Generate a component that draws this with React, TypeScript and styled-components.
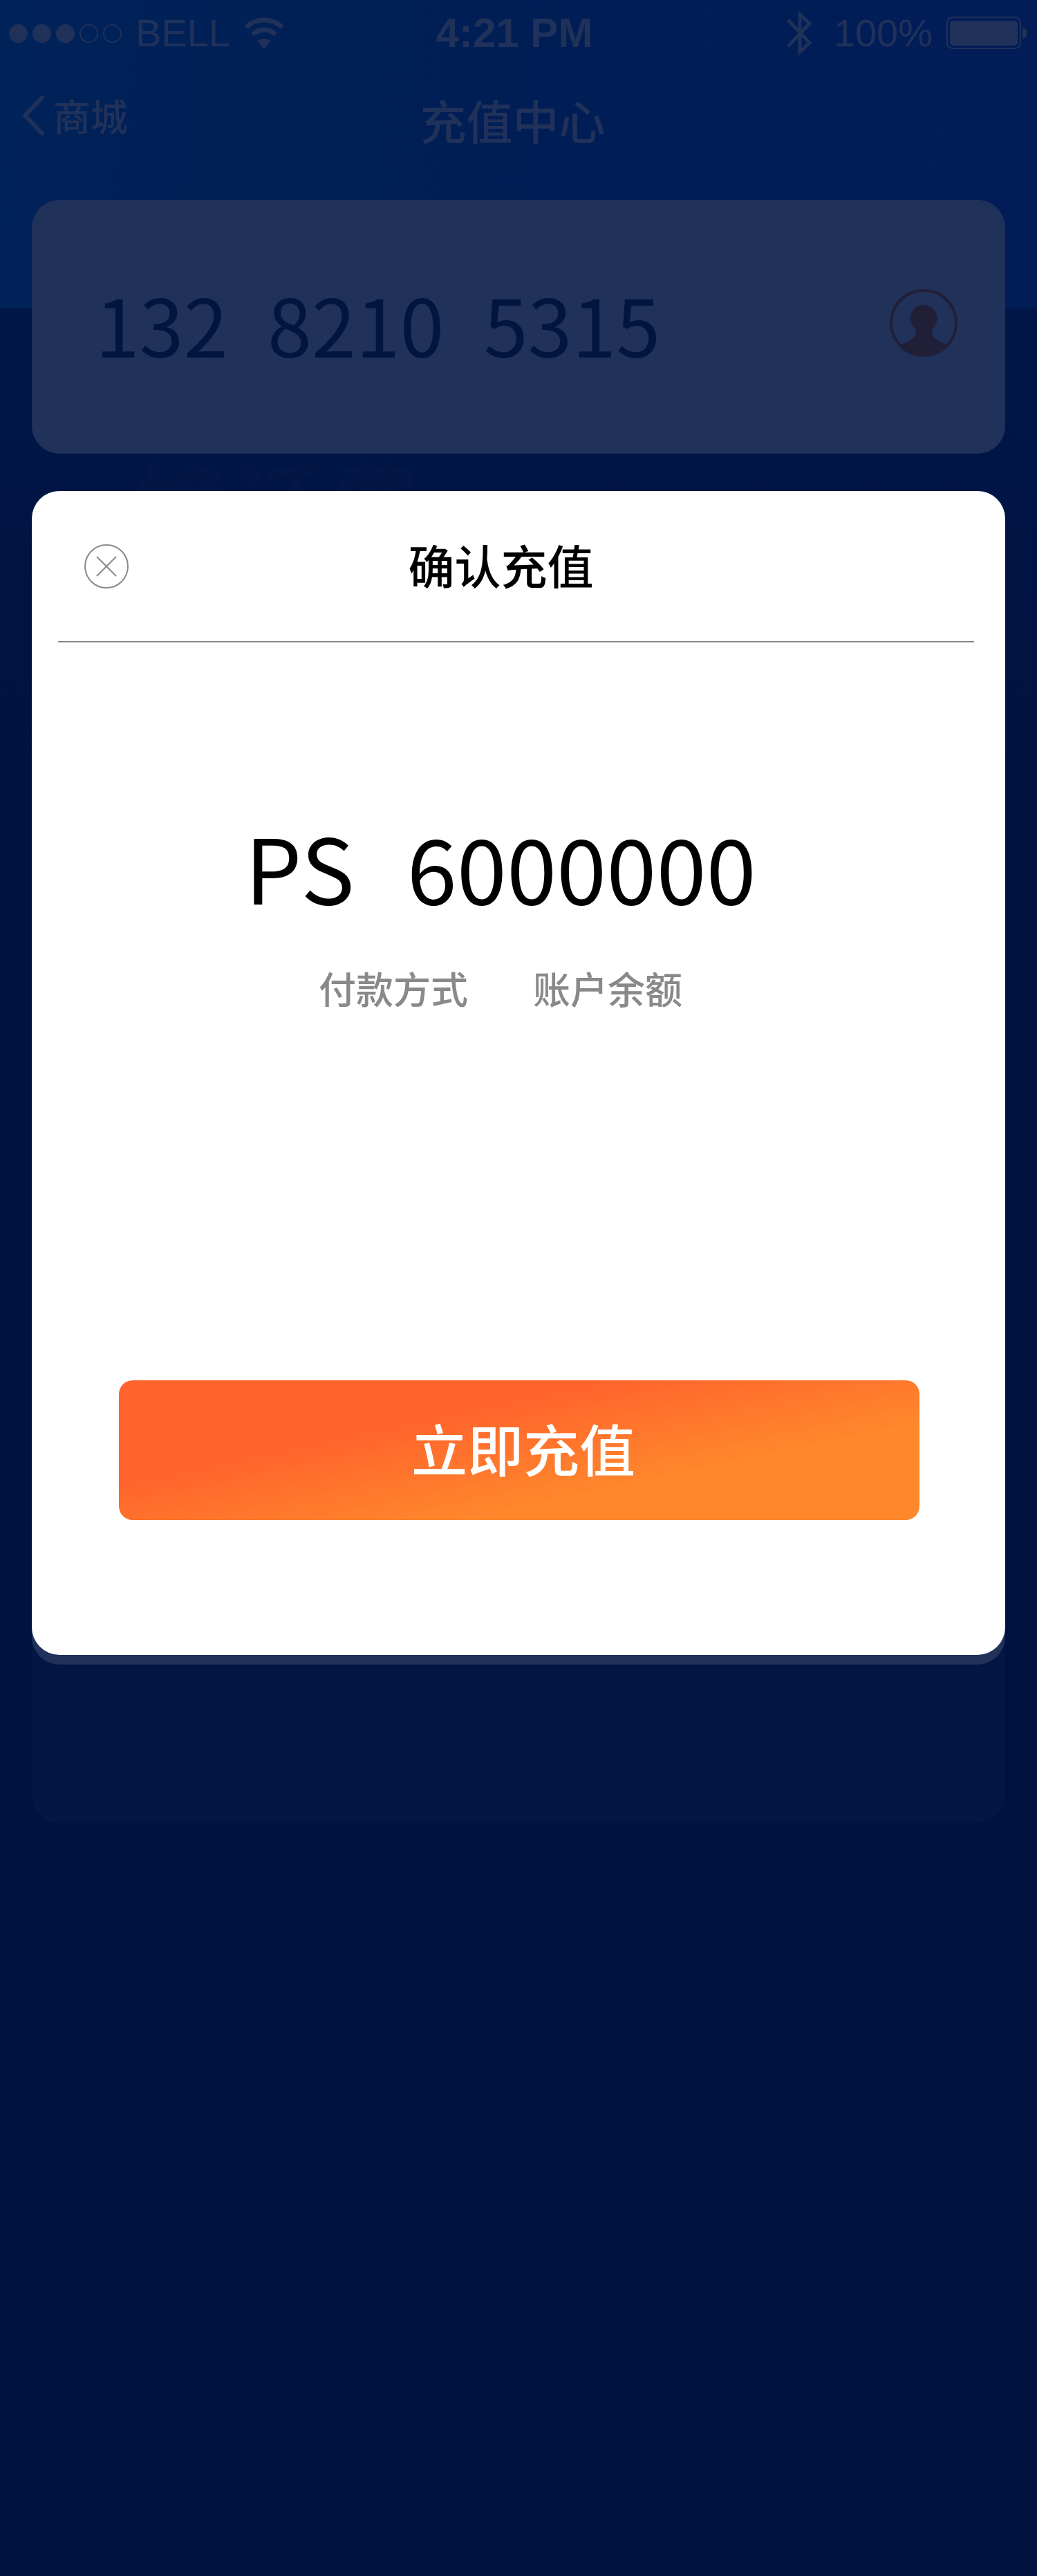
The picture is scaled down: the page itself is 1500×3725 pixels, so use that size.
import React from "react";
import styled, { createGlobalStyle } from "styled-components";

const dim = "#20315a";
const cjk = `"Noto Sans CJK SC", sans-serif`;

const GlobalStyle = createGlobalStyle`
  * { box-sizing: border-box; }
  body { margin: 0; background: #001240; font-family: ${cjk}; }
  button, input { font-family: inherit; border: 0; padding: 0; background: none; }
`;

const Page = styled.div`
  min-height: 100vh;
  background:
    linear-gradient(97deg, #00235a 0%, #001f55 30%, #001e55 55%, #021c58 100%) top / 100% 445px no-repeat,
    linear-gradient(180deg, #001748 445px, #001240 1100px);
`;

const StatusBar = styled.div`
  display: grid;
  grid-template-columns: 1fr auto 1fr;
  align-items: center;
  height: 96px;
  padding: 0 13px;
  color: ${dim};
  font-family: "Liberation Sans", Arial, sans-serif;
  font-size: 56px;
  line-height: 64px;
`;

const StatusGroup = styled.div<{ $end?: boolean }>`
  display: flex;
  align-items: center;
  justify-content: ${(p) => (p.$end ? "flex-end" : "flex-start")};
  gap: 20px;
`;

const Dots = styled.span`
  display: flex;
  gap: 7px;
`;

const Dot = styled.span<{ $on: boolean }>`
  width: 27px;
  height: 27px;
  border-radius: 50%;
  border: 2px solid ${dim};
  background: ${(p) => (p.$on ? dim : "transparent")};
`;

const Clock = styled.time`
  margin-right: 12px;
  font-size: 60px;
  font-weight: 700;
`;

const NavBar = styled.nav`
  display: grid;
  grid-template-columns: 1fr auto 1fr;
  align-items: center;
  height: 193px;
  padding: 0 48px 40px 31px;
  color: ${dim};
`;

const BackLink = styled.a`
  display: flex;
  align-items: center;
  gap: 12px;
  padding-bottom: 12px;
  color: inherit;
  text-decoration: none;
  font-size: 54px;
  font-weight: 500;
  line-height: 64px;
`;

const PageTitle = styled.h1`
  margin: 0;
  font-size: 67px;
  line-height: 80px;
  font-weight: 500;
`;

const Main = styled.main`
  padding: 0 46px;
`;

const PhoneCard = styled.section`
  display: flex;
  align-items: center;
  justify-content: space-between;
  height: 367px;
  padding: 0 69px 12px 92px;
  border-radius: 40px;
  background: ${dim};
`;

const PhoneInput = styled.input`
  flex: 1;
  min-width: 0;
  height: 168px;
  color: #01153f;
  font-size: 115px;
  outline: none;
`;

const IconButton = styled.button`
  display: flex;
  cursor: pointer;
`;

const PromoStrip = styled.div`
  height: 54px;
  padding-left: 149px;
  color: #031746;
  font-size: 140px;
  font-weight: 700;
  line-height: 140px;
`;

/* Lies over the lower part of the promo heading. */
const FaintPanel = styled.div`
  position: relative;
  padding-bottom: 229px;
  border-radius: 40px;
  background: #041744;
`;

const BackPanel = styled.div`
  padding-bottom: 14px;
  border-radius: 40px;
  background: ${dim};
`;

const Dialog = styled.section`
  display: flex;
  flex-direction: column;
  padding: 0 45px 195px 38px;
  border-radius: 40px;
  background: #fff;
`;

const DialogHeader = styled.header`
  display: grid;
  grid-template-columns: 1fr auto 1fr;
  align-items: center;
  height: 219px;
  padding: 0 82px 0 38px;
  border-bottom: 2px solid #898989;
`;

const DialogTitle = styled.h2`
  margin: 0;
  padding-bottom: 6px;
  font-size: 67px;
  line-height: 80px;
  font-weight: 500;
  color: #000;
`;

const Summary = styled.div`
  display: flex;
  flex-direction: column;
  align-items: center;
  gap: 66px;
  padding: 242px 45px 0 0;
`;

const Amount = styled.p`
  display: flex;
  gap: 76px;
  margin: 0;
  color: #000;
  font-size: 130px;
  line-height: 160px;
`;

const Payment = styled.dl`
  display: flex;
  gap: 94px;
  margin: 0;
  color: #898989;
  font-size: 54px;
  font-weight: 500;
  line-height: 64px;

  dd { margin: 0; }
`;

const SubmitButton = styled.button`
  height: 202px;
  margin: 535px 79px 0 88px;
  padding: 0 0 8px 12px;
  border-radius: 20px;
  background: linear-gradient(168deg, #ff642c 33%, #ff872c 69%);
  color: #fff;
  font-size: 81px;
  font-weight: 500;
  line-height: 96px;
  cursor: pointer;
`;

const WifiIcon = () => (
  <svg width="58" height="46" viewBox="0 0 58 46" fill="none" stroke={dim} strokeWidth="7" aria-hidden="true">
    <path d="M3 14.500C17 0 41 0 55 14.500" />
    <path d="M12.500 25C22 16 36 16 45.500 25" />
    <path d="M29 46 19.500 34.500C25 29.500 33 29.500 38.500 34.500Z" fill={dim} stroke="none" />
  </svg>
);

const BluetoothIcon = () => (
  <svg width="48" height="66" viewBox="0 0 48 66" fill="none" stroke={dim} strokeWidth="5" aria-hidden="true">
    <path d="M2 14 33 47 19 60V6L33 19 2 52" />
  </svg>
);

const BatteryIcon = () => (
  <svg width="118" height="48" viewBox="0 0 118 48" aria-hidden="true">
    <rect x="1" y="1" width="106" height="45" rx="8" fill="none" stroke={dim} strokeWidth="2" />
    <rect x="5" y="6" width="98" height="36" rx="5" fill={dim} />
    <path d="M110 15.500C119 17 119 31 110 32.500Z" fill={dim} />
  </svg>
);

const ChevronIcon = () => (
  <svg width="34" height="60" viewBox="0 0 34 60" fill="none" stroke={dim} strokeWidth="6" strokeLinecap="round" strokeLinejoin="round" aria-hidden="true">
    <path d="M30 4 5 30 30 56" />
  </svg>
);

const ContactIcon = () => (
  <svg width="98" height="98" viewBox="0 0 98 98" aria-hidden="true">
    <circle cx="49" cy="49" r="47" fill="none" stroke="#211f38" strokeWidth="4" />
    <path
      d="M49 23C60 23 68.500 31 68.500 42C68.500 52 61 56 61 63C61 71 73 78 83 79.500A46 46 0 0 1 15 79.500C25 78 38 71 38 63C38 56 30 52 30 42C30 31 38 23 49 23Z"
      fill="#211f38"
    />
  </svg>
);

const CloseIcon = () => (
  <svg width="64" height="64" viewBox="0 0 64 64" fill="none" stroke="#898989" strokeWidth="2" aria-hidden="true">
    <circle cx="32" cy="32" r="31" />
    <path d="M18 18 46 46M46 18 18 46" />
  </svg>
);

export default function App() {
  return (
    <>
      <GlobalStyle />
      <Page>
        <StatusBar>
          <StatusGroup>
            <Dots>
              {[true, true, true, false, false].map((on, i) => (
                <Dot key={i} $on={on} />
              ))}
            </Dots>
            <span>BELL</span>
            <WifiIcon />
          </StatusGroup>
          <Clock>4:21 PM</Clock>
          <StatusGroup $end>
            <BluetoothIcon />
            <span>100%</span>
            <BatteryIcon />
          </StatusGroup>
        </StatusBar>
        <NavBar>
          <BackLink href="#mall">
            <ChevronIcon />
            商城
          </BackLink>
          <PageTitle>充值中心</PageTitle>
        </NavBar>
        <Main>
          <PhoneCard>
            <PhoneInput type="tel" aria-label="手机号码" defaultValue={"132\u20028210\u20025315"} />
            <IconButton type="button" aria-label="联系人">
              <ContactIcon />
            </IconButton>
          </PhoneCard>
          <PromoStrip aria-hidden="true">换话费</PromoStrip>
          <FaintPanel>
            <BackPanel>
              <Dialog role="dialog" aria-labelledby="dialog-title">
                <DialogHeader>
                  <IconButton type="button" aria-label="关闭">
                    <CloseIcon />
                  </IconButton>
                  <DialogTitle id="dialog-title">确认充值</DialogTitle>
                </DialogHeader>
                <Summary>
                  <Amount>
                    <span>PS</span>
                    <span>6000000</span>
                  </Amount>
                  <Payment>
                    <dt>付款方式</dt>
                    <dd>账户余额</dd>
                  </Payment>
                </Summary>
                <SubmitButton type="button">立即充值</SubmitButton>
              </Dialog>
            </BackPanel>
          </FaintPanel>
        </Main>
      </Page>
    </>
  );
}
